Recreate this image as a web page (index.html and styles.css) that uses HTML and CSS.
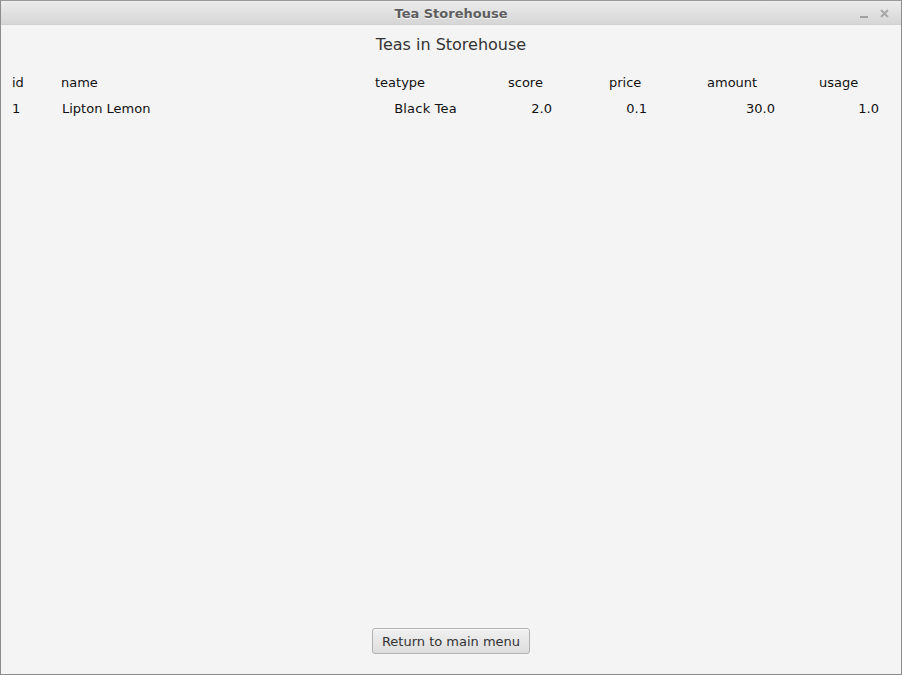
FILE: index.html
```html
<!DOCTYPE html>
<html>
<head>
<meta charset="utf-8">
<link rel="stylesheet" href="styles.css">
</head>
<body>
<div class="window">
  <div class="titlebar">
    <span class="title">Tea Storehouse</span>
    <div class="controls">
      <span class="ctl-min"></span>
      <svg class="ctl-close" width="9" height="9" viewBox="0 0 9 9"><path d="M1 1L8 8M8 1L1 8" stroke="#a8a8a8" stroke-width="2"/></svg>
    </div>
  </div>
  <div class="content">
    <h1 class="heading">Teas in Storehouse</h1>
    <div class="table">
      <div class="c c1 h">id</div>
      <div class="c c2 h">name</div>
      <div class="c c3 h">teatype</div>
      <div class="c c5 h">score</div>
      <div class="c c7 h">price</div>
      <div class="c c9 h">amount</div>
      <div class="c c11 h">usage</div>

      <div class="c c1">1</div>
      <div class="c c2 nm">Lipton Lemon</div>
      <div class="c c3 r">Black Tea</div>
      <div class="c c5 r">2.0</div>
      <div class="c c7 r">0.1</div>
      <div class="c c9 r">30.0</div>
      <div class="c c11 r">1.0</div>
    </div>
    <div class="spacer"></div>
    <div class="footer">
      <button class="btn">Return to main menu</button>
    </div>
  </div>
</div>
</body>
</html>
```
FILE: styles.css
```css
html, body {
  margin: 0;
  padding: 0;
  width: 902px;
  height: 675px;
  overflow: hidden;
  font-family: "DejaVu Sans", sans-serif;
}
.window {
  box-sizing: border-box;
  width: 902px;
  height: 675px;
  border: 1px solid #8c8c8c;
  border-top-color: #9a9a9a;
  display: flex;
  flex-direction: column;
  background: #f4f4f4;
}
.titlebar {
  height: 23px;
  flex: none;
  background: linear-gradient(#ececec, #d6d6d6);
  border-bottom: 1px solid #cfcfcf;
  display: flex;
  align-items: center;
  justify-content: center;
  position: relative;
}
.title {
  font-weight: bold;
  font-size: 13px;
  color: #5e5e5e;
  text-shadow: 0 1px 0 #f6f6f6;
  padding-top: 1px;
}
.controls {
  position: absolute;
  right: 12px;
  top: 8px;
  display: flex;
  align-items: center;
  gap: 12px;
}
.ctl-min {
  display: block;
  width: 8px;
  height: 2px;
  margin-top: 6px;
  background: #a0a0a0;
}
.ctl-close { display: block; }
.content {
  flex: 1;
  display: flex;
  flex-direction: column;
}
.heading {
  margin: 0;
  padding-top: 10px;
  height: 30px;
  text-align: center;
  font-weight: normal;
  font-size: 16px;
  color: #333;
  line-height: 19px;
}
.table {
  display: grid;
  grid-template-columns: 49px 314px 82px 51px 44px 57px 38px 60px 68px 44px 60px;
  grid-auto-rows: 26px;
  padding-left: 11px;
  margin-top: 5px;
  font-size: 13px;
  color: #111;
  line-height: 26px;
}
.c { white-space: nowrap; }
.c1 { grid-column: 1; }
.c2 { grid-column: 2; }
.c3 { grid-column: 3; }
.c5 { grid-column: 5; }
.c7 { grid-column: 7; }
.c9 { grid-column: 9; }
.c11 { grid-column: 11; }
.nm { padding-left: 1px; }
.r { text-align: right; }
.c3.r { letter-spacing: 0.2px; }
.spacer { flex: 1; }
.footer {
  display: flex;
  justify-content: center;
  padding-bottom: 20px;
}
.btn {
  width: 158px;
  height: 26px;
  box-sizing: border-box;
  border: 1px solid #b2b2b2;
  border-radius: 3px;
  background: linear-gradient(#f0f0f0, #dedede);
  box-shadow: inset 0 1px 0 #fafafa;
  font-family: "DejaVu Sans", sans-serif;
  font-size: 13px;
  color: #333;
  padding: 0;
}
```
